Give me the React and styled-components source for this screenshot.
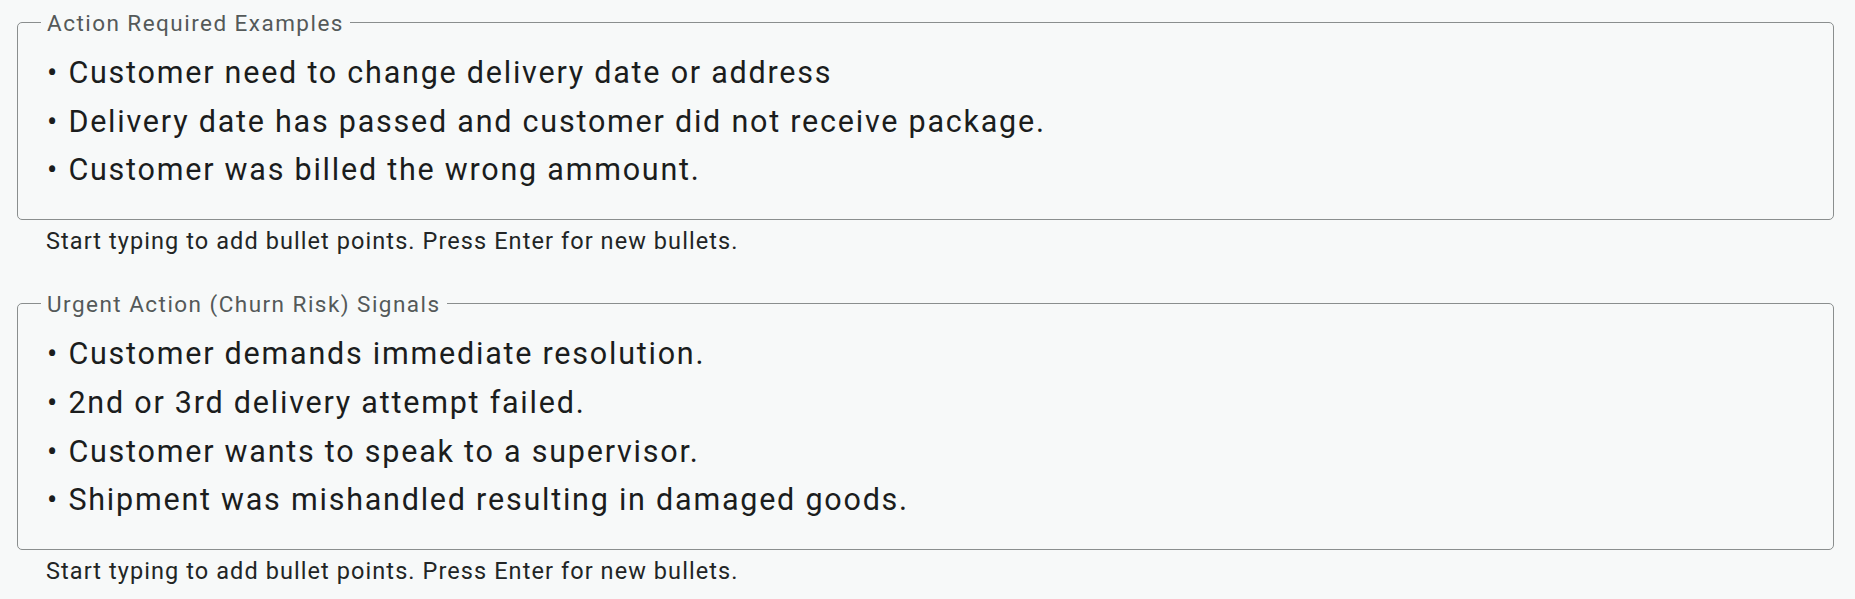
import React from "react"
import styled, { createGlobalStyle } from "styled-components"

const GlobalStyle = createGlobalStyle`
  html, body {
    margin: 0;
    padding: 0;
    background: #f7f9f9;
  }
  body {
    font-family: Roboto, "Liberation Sans", Arial, sans-serif;
  }
`

const Page = styled.div`
  display: flex;
  flex-direction: column;
  gap: 29px;
  padding: 7px 21px 0 17px;
`

const Field = styled.div`
  display: flex;
  flex-direction: column;
`

const Box = styled.fieldset`
  margin: 0;
  min-width: 0;
  padding: 0;
  border: 1px solid #8a8e8e;
  border-radius: 5px;
`

const Legend = styled.legend`
  margin-left: 23px;
  padding: 3px 6px 0;
  font-size: 22.5px;
  line-height: 27px;
  letter-spacing: 0.065em;
  color: #545959;
`

const Lines = styled.div`
  padding: 12px 20px 24px 29px;
  font-size: 30.5px;
  line-height: 48.7px;
  letter-spacing: 0.058em;
  color: #1b1d1d;
`

const Line = styled.div`
  white-space: nowrap;
`

const Helper = styled.div`
  margin-top: 3px;
  padding-left: 29px;
  font-size: 23.5px;
  line-height: 36px;
  letter-spacing: 0.046em;
  color: #222525;
`

const fields = [
  {
    label: "Action Required Examples",
    items: [
      "Customer need to change delivery date or address",
      "Delivery date has passed and customer did not receive package.",
      "Customer was billed the wrong ammount.",
    ],
  },
  {
    label: "Urgent Action (Churn Risk) Signals",
    items: [
      "Customer demands immediate resolution.",
      "2nd or 3rd delivery attempt failed.",
      "Customer wants to speak to a supervisor.",
      "Shipment was mishandled resulting in damaged goods.",
    ],
  },
]

export default function App() {
  return (
    <>
      <GlobalStyle />
      <Page>
        {fields.map((field) => (
          <Field key={field.label}>
            <Box>
              <Legend>{field.label}</Legend>
              <Lines>
                {field.items.map((item) => (
                  <Line key={item}>{"\u2022 " + item}</Line>
                ))}
              </Lines>
            </Box>
            <Helper>Start typing to add bullet points. Press Enter for new bullets.</Helper>
          </Field>
        ))}
      </Page>
    </>
  )
}
